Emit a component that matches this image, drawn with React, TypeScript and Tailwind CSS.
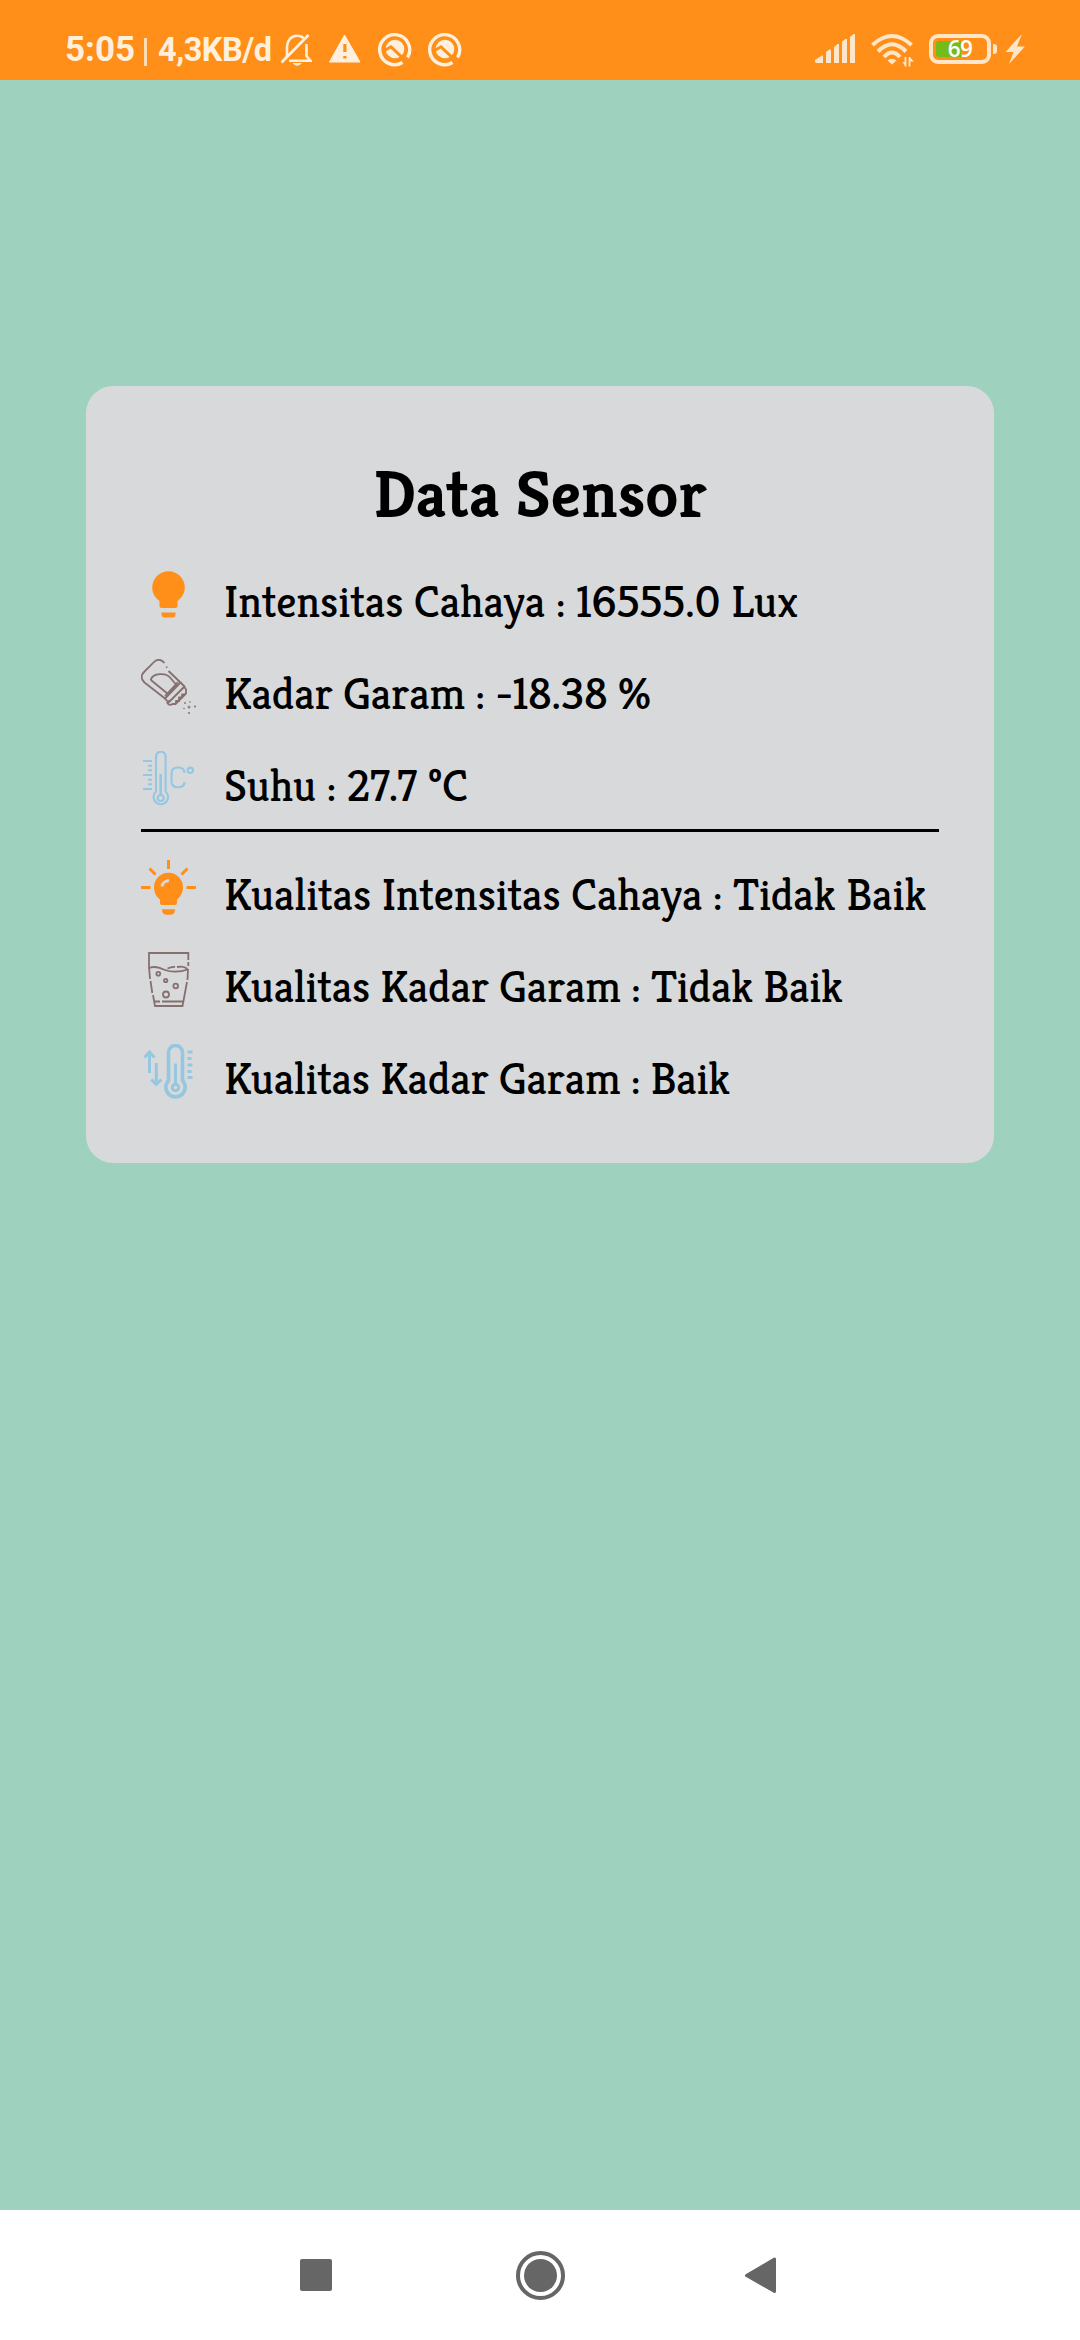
import type { ReactNode } from 'react';

const CREAM = '#fff0dd';
const BROWN = '#85706f';
const BLUE = '#93c7e2';
const ORANGE = '#ff8f18';

function StatusBar() {
  return (
    <header className="flex h-20 shrink-0 items-start bg-[#ff8f18] pt-[30px] font-['Roboto'] font-bold text-[#fff0dd]">
      <span className="ml-[65px] w-[70px] whitespace-nowrap text-[35px] leading-10">5:05</span>
      <span className="ml-[9px] mt-[8px] h-[28px] w-[3px] bg-[#ffddb4]" />
      <span className="ml-[11px] w-[114px] whitespace-nowrap text-[32.5px] leading-[41px] tracking-[-0.5px]">4,3KB/d</span>
      <svg className="ml-[8px]" width="32" height="40" viewBox="280 30 32 40" fill="none" stroke={CREAM} strokeWidth="2.6">
        <path d="M287 57 V48 C287 40 291.500 35.700 297 35.700 C300 35.700 303 37 304.500 39.500" />
        <path d="M306.500 44 V56 L310.500 60.700 H289" />
        <path d="M281.500 62.500 L308.500 35" strokeWidth="2.8" />
        <path d="M292.500 63 H302 Q297 68.500 292.500 63 Z" fill={CREAM} stroke="none" />
      </svg>
      <svg className="ml-[16px]" width="34" height="40" viewBox="328 30 34 40">
        <path fillRule="evenodd" fill={CREAM} stroke={CREAM} strokeLinejoin="round" d="M344.500 35 L360 62 H329.500 Z M342.800 43.500 V52.500 H347 V43.500 Z M342.800 55.500 V59 H347 V55.500 Z" />
      </svg>
      {[0, 1].map((i) => (
        <svg key={i} className="ml-[16px]" width="34" height="40" viewBox="378 30 34 40">
          <path d="M402.500 62.500 A15 15 0 1 1 407.500 57.500" fill="none" stroke={CREAM} strokeWidth="3.4" />
          <circle cx="395" cy="49" r="9.300" fill={CREAM} />
          <path d="M384.500 50.500 L391 46.800 L407 62" fill="none" stroke={ORANGE} strokeWidth="3" />
        </svg>
      ))}
      <svg className="ml-auto" width="41" height="40" viewBox="815 30 41 40" fill="#ffe6c8">
        <path d="M815 62 V60 L822 55.500 H823 V63 H816 Z" />
        <path d="M826 63 V52 L829.500 49.500 H831 V63 Z" />
        <path d="M834 63 V47 L837.500 44 H839 V63 Z" />
        <path d="M842 63 V41.500 L845.500 39 H847 V63 Z" />
        <path d="M850 63 V37 L853.500 34 H855 V63 Z" />
      </svg>
      <svg className="ml-[15px]" width="44" height="40" viewBox="871 30 44 40" fill="none" stroke="#ffe6c8">
        <path d="M872.500 45 Q892 27 911.500 45" strokeWidth="4" />
        <path d="M878 51.500 Q892 37 906 51.500" strokeWidth="4" />
        <path d="M884 57 Q892 48 900 57" strokeWidth="4" />
        <path d="M887.500 60.500 Q892 57 896.500 60.500 L892 64.500 Z" fill="#ffe6c8" stroke="none" />
        <path d="M905.500 57 V66.500 M909.500 66.500 V57" strokeWidth="1.800" />
        <path d="M902.500 62 H905.500 V66.500 Z M909.500 57 L914 61.500 H909.500 Z" fill="#ffe6c8" stroke="none" />
      </svg>
      <div className="relative ml-[14px] mt-[4px] h-[30px] w-[62px] rounded-[9px] border-4 border-[#ffe6c8]">
        <div className="absolute left-[3px] top-[3px] h-4 w-[25px] rounded-l-[3px] bg-[#74bc1a]" />
        <div className="absolute inset-0 flex items-center justify-center font-['Open_Sans'] text-[22.5px] font-semibold leading-none tracking-[-0.6px] text-white">69</div>
      </div>
      <div className="ml-[2px] mt-[14px] h-[10px] w-[4px] rounded-r-[3px] bg-[#ffe6c8]" />
      <svg className="ml-[8px] mr-[55px]" width="20" height="40" viewBox="1004 30 20 40" fill="#ffe6c8">
        <path d="M1021 34 L1004.500 52 H1012.500 L1008 64 L1024 46.500 H1016 Z" />
      </svg>
    </header>
  );
}

function Bulb() {
  return (
    <svg width="55" height="55" viewBox="141 567 55 55" fill={ORANGE}>
      <path d="M168.500 571.200 a16.200 16.200 0 0 1 16.300 16.300 c0 6 -3.200 10.500 -7.300 13.500 v5 q0 2 -2 2 h-14 q-2 0 -2 -2 v-5 c-4.200 -3 -7.300 -7.500 -7.300 -13.500 a16.200 16.200 0 0 1 16.300 -16.300 Z" />
      <path d="M161.500 612.500 h14 v1.500 q0 3.500 -3.500 3.500 h-7 q-3.500 0 -3.500 -3.500 Z" />
    </svg>
  );
}

function SaltShaker() {
  return (
    <svg width="55" height="55" viewBox="141 659 55 55" fill="none" stroke={BROWN} strokeWidth="1.800" strokeLinejoin="round">
      <path d="M164.500 663 Q159 656.800 153.500 662.500 L144.500 671.500 Q138.800 677 144.500 682.500 L165 698.500 L180.500 682.500 L168.500 671" />
      <path d="M166.300 666.800 l.8 .8" strokeWidth="2" />
      <path d="M150.800 679.500 C153 673 166 672.300 170 677.500 L176.500 685 L168 694 L151.500 680.500 Z" />
      <path d="M165 698.500 L168.500 702.500 L184.500 686.500 L180.500 682.500 M168.500 702.500 L169.500 700 M165 696 L178 682" />
      <path d="M167 702 C168.500 706.500 172 704.500 172.500 704 H175.500 L186 693.500 V689.500 L184 686.500" />
      <path d="M176 704 v-3 h3 v-3.500 h3 v-3 h3" />
      <g fill={BROWN} stroke="none">
        <circle cx="185" cy="703" r=".9" /><circle cx="190" cy="702" r=".8" />
        <circle cx="195" cy="706.500" r="1" /><circle cx="189" cy="713" r="1" />
        <circle cx="184" cy="708.500" r=".8" />
        <path d="M189 705 l.6 1.500 1.500 .6 -1.500 .6 -.6 1.500 -.6 -1.500 -1.500 -.6 1.500 -.6 Z" />
      </g>
    </svg>
  );
}

function Celsius() {
  return (
    <svg width="55" height="55" viewBox="141 751 55 55" fill="none" stroke={BLUE} strokeWidth="2.100">
      <path d="M156 791.500 V756.500 a4.800 4.800 0 0 1 9.600 0 V791.500 a7.300 7.300 0 1 1 -9.600 0 Z" />
      <circle cx="160.700" cy="798" r="3" />
      <path d="M160.700 795 V774" strokeWidth="2.600" />
      <path d="M143 761 H152 M143 775 H152 M143 789 H152" />
      <path d="M148 765.700 H152 M148 770.300 H152 M148 779.700 H152 M148 784.300 H152" />
      <path d="M184.500 773 C184.500 769.500 182 767.500 178 767.500 C174 767.500 171.500 769.500 171.500 773.500 V781.500 C171.500 785.500 174 787.300 178 787.300 C182 787.300 184.500 785.500 184.500 782" />
      <circle cx="190.300" cy="770.300" r="2.700" />
    </svg>
  );
}

function BulbLit() {
  return (
    <svg width="55" height="55" viewBox="141 860 55 55" fill={ORANGE}>
      <path d="M168.500 872.700 a14.500 14.500 0 0 1 14.500 14.500 c0 5.500 -2.600 9.500 -6 12.300 v3.500 q0 2 -2 2 h-13 q-2 0 -2 -2 v-3.500 c-3.400 -2.800 -6 -6.800 -6 -12.300 a14.500 14.500 0 0 1 14.500 -14.500 Z" />
      <path d="M162 909.300 h13 q0 5.500 -5 5.500 h-3 q-5 0 -5 -5.500 Z" />
      <path d="M162 886.500 Q162.500 881.500 169 880.500" fill="none" stroke="#d8d9da" strokeWidth="2.800" />
      <path d="M168.500 860 V869 M149.500 868.500 L155.500 874.500 M187.500 868.500 L181.500 874.500 M141 887.500 H150.500 M186.500 887.500 H196" fill="none" stroke={ORANGE} strokeWidth="3" />
    </svg>
  );
}

function Glass() {
  return (
    <svg width="55" height="55" viewBox="141 952 55 55" fill="none" stroke={BROWN} strokeWidth="1.800">
      <path d="M149 969 V953 H188.300 V960 M188.300 962 V966 M188 969 L187.500 980 M187 982 L182.500 1006 H155 L153 995 M152.300 993 L150.500 981 M150 979 L149.200 969" />
      <path d="M154.500 1001.500 H160 M162 1001.500 H183" />
      <path d="M149.300 968 C155 965.500 160 968 165 970 S180 972.500 187.500 969.500 M167.500 968.500 Q172 966.500 175 967 M177 967 Q184 965.500 187.500 969" />
      <circle cx="158.300" cy="973.700" r="1.900" /><circle cx="165.700" cy="980.500" r="1.700" />
      <circle cx="175.700" cy="986" r="2.300" /><circle cx="166" cy="994.500" r="3" />
    </svg>
  );
}

function ThermometerRange() {
  return (
    <svg width="55" height="55" viewBox="141 1044 55 55" fill="none" stroke={BLUE} strokeWidth="3">
      <path d="M168.500 1080.500 V1052.500 a7 7 0 0 1 14 0 V1080.500 a9.700 9.700 0 1 1 -14 0 Z" strokeWidth="3.600" />
      <circle cx="175.500" cy="1087.500" r="3.200" />
      <path d="M175.500 1084.500 V1063.500" strokeWidth="2.800" />
      <path d="M149.500 1073 V1052.500 M144.500 1057.500 L149.500 1052 L154.500 1057.500" />
      <path d="M156.300 1063 V1083.500 M151.300 1079.500 L156.300 1084.500 L161.300 1079.500" />
      <path d="M187.500 1052 H192.500 M187.500 1065 H192.500 M187.500 1077.500 H192.500 M187.500 1058.500 H191.500 M187.500 1071.500 H191.500" strokeWidth="3" />
    </svg>
  );
}

function Row({ icon, tracking, children }: { icon: ReactNode; tracking: string; children: ReactNode }) {
  return (
    <li className="flex h-[55px] items-start gap-[28px]">
      <span className="shrink-0">{icon}</span>
      <span className={`mt-[7px] whitespace-nowrap text-[45px] leading-[55px] ${tracking}`}>{children}</span>
    </li>
  );
}

export default function App() {
  return (
    <div className="flex h-[2340px] w-[1080px] flex-col bg-[#9ed2be]">
      <StatusBar />
      <main className="flex-1 px-[86px] pt-[306px]">
        <section className="h-[777px] rounded-[27px] bg-[#d8d9da] px-[55px] pt-[69px] font-['Kreon','DejaVu_Serif_Condensed',serif] text-black">
          <h1 className="h-[112px] text-center text-[66.5px] font-bold leading-[78px]">Data Sensor</h1>
          <ul className="flex flex-col gap-[37px]">
            <Row icon={<Bulb />} tracking="tracking-[-0.08px]">Intensitas Cahaya : 16555.0 Lux</Row>
            <Row icon={<SaltShaker />} tracking="tracking-[-0.22px]">Kadar Garam : -18.38 %</Row>
            <Row icon={<Celsius />} tracking="tracking-[-0.15px]">Suhu : 27.7 ºC</Row>
          </ul>
          <hr className="mb-[28px] mt-[23px] h-[3px] border-0 bg-black" />
          <ul className="flex flex-col gap-[37px]">
            <Row icon={<BulbLit />} tracking="tracking-[-0.12px]">Kualitas Intensitas Cahaya : Tidak Baik</Row>
            <Row icon={<Glass />} tracking="tracking-[-0.27px]">Kualitas Kadar Garam : Tidak Baik</Row>
            <Row icon={<ThermometerRange />} tracking="tracking-[-0.29px]">Kualitas Kadar Garam : Baik</Row>
          </ul>
        </section>
      </main>
      <nav className="flex h-[130px] shrink-0 items-center bg-white pl-[300px]">
        <div className="h-8 w-8 rounded-[2px] bg-[#666]" />
        <svg className="ml-[184px]" width="50" height="50" viewBox="0 0 50 50">
          <circle cx="24.500" cy="25.500" r="22.500" fill="none" stroke="#666" strokeWidth="4" />
          <circle cx="24.500" cy="25.500" r="16.500" fill="#666" />
        </svg>
        <svg className="ml-[178px]" width="32" height="38" viewBox="0 0 32 38">
          <path d="M2.500 19.500 L30.500 3 V35.500 Z" fill="#666" stroke="#666" strokeWidth="3" strokeLinejoin="round" />
        </svg>
      </nav>
    </div>
  );
}
